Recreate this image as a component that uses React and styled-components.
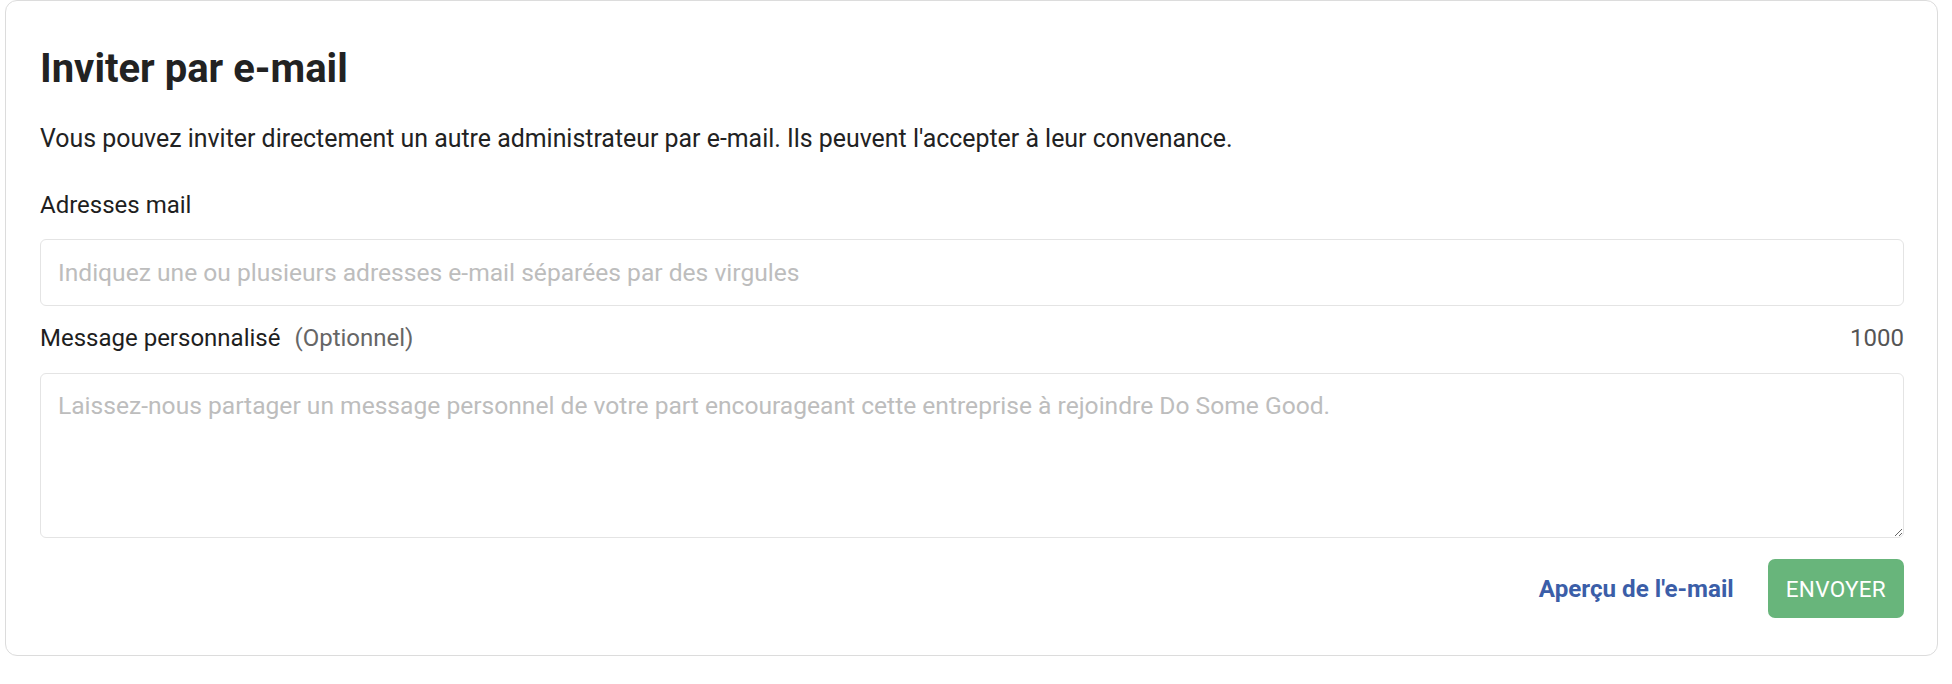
import React from "react";
import styled, { createGlobalStyle } from "styled-components";

const GlobalStyle = createGlobalStyle`
  * { box-sizing: border-box; }
  body {
    margin: 0;
    background: #ffffff;
    font-family: Roboto, "Noto Sans", sans-serif;
    color: #222222;
  }
`;

const Page = styled.div`
  padding: 0 14px 27px 5px;
`;

const Card = styled.section`
  border: 1px solid #dcdcdc;
  border-radius: 12px;
  background: #fff;
  padding: 44px 33px 37px 34px;
  display: flex;
  flex-direction: column;
`;

const Title = styled.h2`
  margin: 0;
  font-size: 40px;
  line-height: 48px;
  font-weight: 700;
  color: #222;
`;

const Intro = styled.p`
  margin: 30px 0 0;
  font-size: 24.9px;
  line-height: 32px;
  color: #222;
`;

const LabelRow = styled.div`
  display: flex;
  align-items: baseline;
  justify-content: space-between;
  margin-top: ${(p) => p.$gap}px;
`;

const Label = styled.label`
  font-size: 24px;
  line-height: 32px;
  color: #1e1e1e;
`;

const Optional = styled.span`
  margin-left: 14px;
  color: #666;
`;

const Counter = styled.span`
  font-size: 24px;
  line-height: 32px;
  color: #555;
`;

const fieldBase = `
  width: 100%;
  border: 1px solid #e4e4e4;
  border-radius: 6px;
  background: #fff;
  font-family: Roboto, "Noto Sans", sans-serif;
  font-size: 24.6px;
  color: #222;
  outline: none;
  &::placeholder { color: #bdbdbd; }
`;

const Input = styled.input`
  ${fieldBase}
  display: block;
  height: 67px;
  margin-top: 18px;
  padding: 0 17px;
`;

const TextArea = styled.textarea`
  ${fieldBase}
  display: block;
  height: 165px;
  margin-top: 19px;
  padding: 16px 17px;
  line-height: 32px;
  resize: vertical;
`;

const Actions = styled.div`
  display: flex;
  justify-content: flex-end;
  align-items: center;
  gap: 34px;
  margin-top: 21px;
`;

const LinkButton = styled.button`
  border: none;
  background: none;
  padding: 0;
  font-family: Roboto, "Noto Sans", sans-serif;
  font-size: 24.2px;
  font-weight: 700;
  color: #3b5ea8;
  cursor: pointer;
`;

const SendButton = styled.button`
  height: 59px;
  padding: 0 18px;
  border: none;
  border-radius: 7px;
  background: #68b57b;
  color: #fff;
  font-family: Roboto, "Noto Sans", sans-serif;
  font-size: 22.5px;
  letter-spacing: 0.3px;
  cursor: pointer;
`;

export default function App() {
  return (
    <>
      <GlobalStyle />
      <Page>
        <Card>
          <Title>Inviter par e-mail</Title>
          <Intro>
            Vous pouvez inviter directement un autre administrateur par e-mail. Ils peuvent
            l'accepter à leur convenance.
          </Intro>
          <LabelRow $gap={34}>
            <Label htmlFor="emails">Adresses mail</Label>
          </LabelRow>
          <Input
            id="emails"
            type="text"
            placeholder="Indiquez une ou plusieurs adresses e-mail séparées par des virgules"
          />
          <LabelRow $gap={16}>
            <Label htmlFor="message">
              Message personnalisé
              <Optional>(Optionnel)</Optional>
            </Label>
            <Counter>1000</Counter>
          </LabelRow>
          <TextArea
            id="message"
            placeholder="Laissez-nous partager un message personnel de votre part encourageant cette entreprise à rejoindre Do Some Good."
          />
          <Actions>
            <LinkButton type="button">Aperçu de l'e-mail</LinkButton>
            <SendButton type="button">ENVOYER</SendButton>
          </Actions>
        </Card>
      </Page>
    </>
  );
}
